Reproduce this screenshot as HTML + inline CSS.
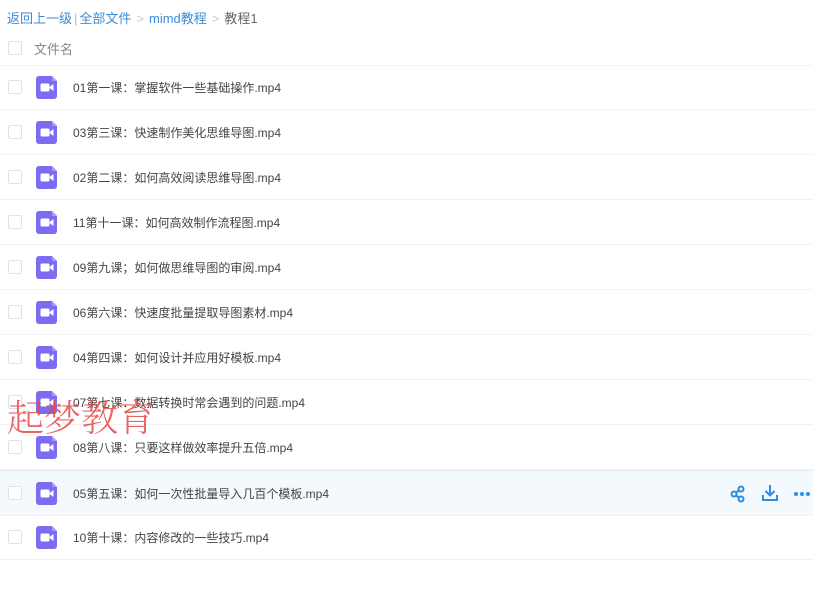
<!DOCTYPE html>
<html><head><meta charset="utf-8"><style>
body{margin:0;width:813px;height:591px;background:#fff;font-family:"Liberation Sans","Noto Sans CJK SC",sans-serif;position:relative;overflow:hidden}
.bc{position:absolute;left:7px;top:8px;font-size:13px;color:#3b8cd6;white-space:nowrap}
.bc .g{color:#c8ccd2;margin:0 5px}
.bc .k{color:#666}
.hd{position:absolute;left:0;top:30px;width:813px;height:35px;border-bottom:1px solid #f0f2f4}
.cb{position:absolute;left:8px;width:12px;height:12px;border:1px solid #dfe3e8;border-radius:2px;background:#fff}
.hd .t{position:absolute;left:34px;top:9px;font-size:13px;color:#888}
.row{position:absolute;left:0;width:813px;height:44px;border-bottom:1px solid #f0f2f4}
.row.sel{background:#f4f9fe;border-top:1px solid #e5eef8}
.ic{position:absolute;left:36px;top:11px;width:21px;height:23px}
.nm{position:absolute;left:73px;top:14px;font-size:12px;color:#444}
.wm{position:absolute;left:7px;top:397px;font-family:"Noto Serif CJK SC",serif;font-weight:300;font-size:37px;color:rgba(232,70,70,.85);line-height:1}
.ops{position:absolute;left:0;top:12px}
</style></head><body>
<div class="bc">返回上一级<span style="color:#bbb;margin:0 2px">|</span>全部文件<span class="g">&gt;</span>mimd教程<span class="g">&gt;</span><span class="k">教程1</span></div>
<div class="hd"><div class="cb" style="top:11px"></div><div class="t">文件名</div></div>
<div id="rows"></div>
<script>
var n=["01第一课：掌握软件一些基础操作.mp4","03第三课：快速制作美化思维导图.mp4","02第二课：如何高效阅读思维导图.mp4","11第十一课：如何高效制作流程图.mp4","09第九课；如何做思维导图的审阅.mp4","06第六课：快速度批量提取导图素材.mp4","04第四课：如何设计并应用好模板.mp4","07第七课：数据转换时常会遇到的问题.mp4","08第八课：只要这样做效率提升五倍.mp4","05第五课：如何一次性批量导入几百个模板.mp4","10第十课：内容修改的一些技巧.mp4"];
var h="";
for(var i=0;i<n.length;i++){var y=65+45*i;
h+='<div class="row'+(i==9?' sel':'')+'" style="top:'+y+'px"><div class="cb" style="top:15px"></div>'+
'<svg class="ic" viewBox="0 0 21 23"><path d="M3 0H16L21 5V20a3 3 0 0 1-3 3H3a3 3 0 0 1-3-3V3a3 3 0 0 1 3-3z" fill="#7c6cf1"/><path d="M16 0L21 5H17a1 1 0 0 1-1-1z" fill="#a79df6"/><rect x="4.5" y="7.5" width="9" height="8" rx="1.5" fill="#fff"/><path d="M13 11.5L17.5 8V15z" fill="#fff"/></svg>'+
'<div class="nm">'+n[i]+'</div>';
if(i==9)h+='<div class="ops"><svg width="813" height="20" viewBox="0 0 813 20" style="position:absolute;left:0;top:0"><g fill="none" stroke="#2d8fe0" stroke-width="2"><circle cx="734" cy="11" r="2.5"/><circle cx="741" cy="6" r="2.5"/><circle cx="741" cy="16" r="2.5"/><path d="M736 9.5L739 7.5M736 12.5L739 14.5"/><path d="M770 2V12M765.5 8L770 12.5L774.5 8M763 12V17H777V12"/></g><g fill="#2d8fe0"><circle cx="796" cy="11" r="2"/><circle cx="802" cy="11" r="2"/><circle cx="808" cy="11" r="2"/></g></svg></div>';
h+='</div>';}
document.getElementById('rows').innerHTML=h;
</script>
<div class="wm">起梦教育</div>
</body></html>
